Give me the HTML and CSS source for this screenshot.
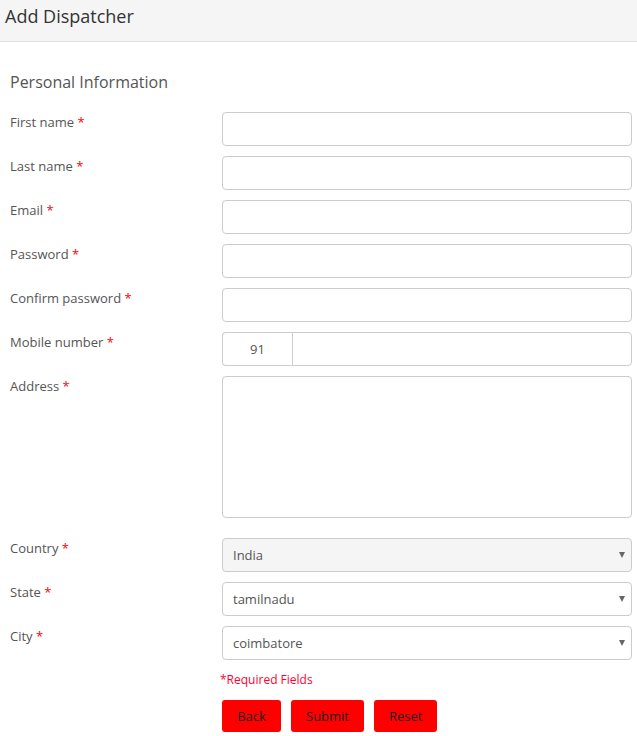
FILE: index.html
```html
<!DOCTYPE html>
<html>
<head>
<meta charset="utf-8">
<link rel="stylesheet" href="styles.css">
</head>
<body>
<div class="header"><h1 class="title">Add Dispatcher</h1></div>
<div class="content">
  <h2 class="section">Personal Information</h2>
  <div class="form">
    <label class="label">First name <span class="req">*</span></label>
    <input class="input" type="text">
    <label class="label">Last name <span class="req">*</span></label>
    <input class="input" type="text">
    <label class="label">Email <span class="req">*</span></label>
    <input class="input" type="text">
    <label class="label">Password <span class="req">*</span></label>
    <input class="input" type="password">
    <label class="label">Confirm password <span class="req">*</span></label>
    <input class="input" type="password">
    <label class="label">Mobile number <span class="req">*</span></label>
    <div class="phone"><span class="prefix">91</span><input class="input phone-input" type="text"></div>
    <label class="label">Address <span class="req">*</span></label>
    <textarea class="input textarea"></textarea>
    <label class="label">Country <span class="req">*</span></label>
    <div class="select disabled"><span>India</span><span class="caret"></span></div>
    <label class="label">State <span class="req">*</span></label>
    <div class="select"><span>tamilnadu</span><span class="caret"></span></div>
    <label class="label">City <span class="req">*</span></label>
    <div class="select"><span>coimbatore</span><span class="caret"></span></div>
    <div class="spacer"></div>
    <div class="footer">
      <div class="note">*Required Fields</div>
      <div class="buttons">
        <button class="btn btn-back">Back</button>
        <button class="btn btn-submit">Submit</button>
        <button class="btn btn-reset">Reset</button>
      </div>
    </div>
  </div>
</div>
</body>
</html>
```
FILE: styles.css
```css
* { box-sizing: border-box; }
html, body { margin: 0; padding: 0; background: #fff; }
body { font-family: "Open Sans", "Liberation Sans", sans-serif; color: #555; width: 637px; }
.header { height: 42px; background: #f5f5f5; border-bottom: 1px solid #e0e0e0; padding: 0 5px; }
.title { margin: 0; font-size: 18px; font-weight: 400; color: #333; line-height: 32px; }
.content { padding: 0 5px 0 10px; }
.section { margin: 28px 0 18px; font-size: 16px; font-weight: 400; color: #555; line-height: 24px; }
.form { display: grid; grid-template-columns: 212px 410px; row-gap: 10px; }
.label { font-size: 13px; line-height: 20px; padding-top: 0px; color: #555; }
.req { color: #ff0000; }
.input { height: 34px; border: 1px solid #ccc; border-radius: 4px; background: #fff; margin: 0; padding: 6px 10px; font: inherit; font-size: 13px; width: 100%; display: block; }
.phone { display: flex; height: 34px; }
.prefix { width: 70px; flex: none; border: 1px solid #ccc; border-right: none; border-radius: 4px 0 0 4px; display: flex; align-items: center; justify-content: center; font-size: 13px; color: #555; padding-left: 0; }
.phone-input { border-radius: 0 4px 4px 0; flex: 1; }
.textarea { height: 142px; resize: none; margin-bottom: 10px; }
.select { height: 34px; border: 1px solid #ccc; border-radius: 4px; background: #fff; display: flex; align-items: center; justify-content: space-between; padding: 0 6px 0 10px; font-size: 13px; color: #555; }
.select.disabled { background: #f5f5f5; }
.caret { width: 0; height: 0; border-left: 3.5px solid transparent; border-right: 3.5px solid transparent; border-top: 6px solid #666; margin-right: 0; }
.footer { padding-top: 1px; }
.note { color: #ff0033; font-size: 12px; line-height: 16px; margin: 1px 0 0 -2px; }
.buttons { display: flex; gap: 10px; margin-top: 12px; }
.btn { height: 32px; border: none; border-radius: 3px; background: #ff0000; color: #222; font-family: inherit; font-size: 13px; padding: 0 15px; cursor: pointer; }
.btn-back { width: 59px; }
.btn-submit { width: 73px; }
.btn-reset { width: 63px; }
```
